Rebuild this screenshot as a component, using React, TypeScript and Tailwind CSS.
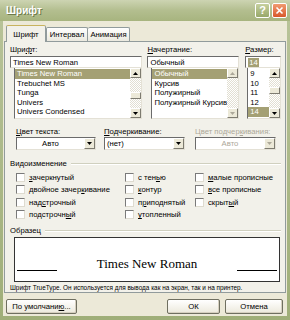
import type { ReactNode } from "react"

const sunken =
  "border border-t-[#6b6b6b] border-l-[#6b6b6b] border-r-[#e4e1d6] border-b-[#e4e1d6] bg-white"
const raised =
  "border border-t-white border-l-white border-r-[#7d7b70] border-b-[#7d7b70] bg-[#ece9d8]"

function Arrow({ up, disabled }: { up?: boolean; disabled?: boolean }) {
  return (
    <svg width="5" height="3" viewBox="0 0 5 3">
      <polygon points={up ? "0,3 5,3 2.5,0" : "0,0 5,0 2.5,3"} fill={disabled ? "#aca899" : "#000"} />
    </svg>
  )
}

function ScrollBtn({ up, disabled }: { up?: boolean; disabled?: boolean }) {
  return (
    <div className={`${raised} flex h-[10px] w-full items-center justify-center`}>
      <Arrow up={up} disabled={disabled} />
    </div>
  )
}

function ScrollBar({ thumb, disabled }: { thumb?: number; disabled?: boolean }) {
  return (
    <div className="flex h-full w-[11px] shrink-0 flex-col bg-[repeating-conic-gradient(#ffffff_0_25%,#e2dfd2_0_50%)] bg-[length:2px_2px]">
      <ScrollBtn up disabled={disabled} />
      <div className="relative flex-1">
        {thumb !== undefined && (
          <div className={`${raised} absolute left-0 h-[7px] w-full`} style={{ top: thumb }} />
        )}
      </div>
      <ScrollBtn disabled={disabled} />
    </div>
  )
}

function List({ items, selected, thumb, disabled }: { items: string[]; selected: string; thumb?: number; disabled?: boolean }) {
  return (
    <div className={`${sunken} flex h-[51px] border-t-0`}>
      <div className="flex-1 overflow-hidden pt-[1px]">
        {items.map((it) => (
          <div
            key={it}
            className={`h-[9.6px] whitespace-nowrap pl-[2px] leading-[9.6px] ${it === selected ? "bg-[#a4a074] text-white" : ""}`}
          >
            {it}
          </div>
        ))}
      </div>
      <ScrollBar thumb={thumb} disabled={disabled} />
    </div>
  )
}

function Select({ value, disabled, left }: { value: string; disabled?: boolean; left?: boolean }) {
  return (
    <div className={`${sunken} flex h-[13px] items-center ${disabled ? "bg-[#ece9d8] text-[#aca899]" : ""}`}>
      <div className={`flex-1 ${left ? "pl-[2px]" : "text-center"}`}>{value}</div>
      <div className={`${raised} flex h-[11px] w-[11px] items-center justify-center`}>
        <Arrow disabled={disabled} />
      </div>
    </div>
  )
}

function Check({ children }: { children: ReactNode }) {
  return (
    <div className="flex h-[12.5px] items-center gap-[4px] whitespace-nowrap">
      <div className="h-[9px] w-[9px] shrink-0 border border-t-[#7a7a7a] border-l-[#7a7a7a] border-r-[#dedbd0] border-b-[#dedbd0] bg-white" />
      <span>{children}</span>
    </div>
  )
}

function Group({ title }: { title: string }) {
  return (
    <div className="flex items-center gap-[4px]">
      <span>{title}</span>
      <div className="h-px flex-1 border-t border-t-[#d0d0bf] border-b border-b-white" />
    </div>
  )
}

function Button({ children, w }: { children: ReactNode; w: string }) {
  return (
    <div
      className={`${w} flex h-[15px] items-center justify-center rounded-[2px] border border-[#6f6f60] bg-gradient-to-b from-white to-[#ece9dc] shadow-[inset_-1px_-1px_0_#d6d0c0]`}
    >
      {children}
    </div>
  )
}

export default function App() {
  return (
    <div
      className="flex h-[320px] w-[290px] flex-col overflow-hidden bg-gradient-to-b from-[#b9c49a] to-[#9fae78] text-[7.7px] leading-[9px] text-black [&_u]:underline-offset-[1px]"
      style={{ fontFamily: '"Liberation Sans", Arial, sans-serif' }}
    >
      {/* title bar */}
      <div className="flex h-[21px] shrink-0 items-center justify-between bg-gradient-to-b from-[#cdd4b2] via-[#b3be8f] to-[#a7b47f] pl-[6px] pr-[3px]">
        <span className="text-[10px] font-bold text-white [text-shadow:1px_1px_0_#6d7a4a]">Шрифт</span>
        <div className="flex gap-[2px]">
          <div className="flex h-[15px] w-[15px] items-center justify-center rounded-[2px] border border-white bg-gradient-to-b from-[#c6d09e] to-[#98a86a] text-[11px] font-bold text-white">
            ?
          </div>
          <div className="flex h-[15px] w-[15px] items-center justify-center rounded-[2px] border border-white bg-gradient-to-b from-[#f09a70] to-[#d8572a]">
            <svg width="9" height="9" viewBox="0 0 9 9">
              <path d="M1.5 1.5 L7.5 7.5 M7.5 1.5 L1.5 7.5" stroke="#fff" strokeWidth="1.6" />
            </svg>
          </div>
        </div>
      </div>

      {/* body */}
      <div className="mx-[3px] mb-[4px] flex flex-1 flex-col bg-[#ece9d8] px-[1px] pt-[3px]">
        {/* tabs */}
        <div className="flex h-[17px] items-end pl-[2px]">
          <div className="relative z-10 mb-[-1px] flex h-[17px] w-[40px] items-center justify-center rounded-t-[2px] border border-b-0 border-[#919b9c] border-t-[#c8b35e] bg-[#f2f1ea]">
            Шрифт
          </div>
          <div className="flex h-[14px] w-[42px] items-center justify-center rounded-t-[2px] border border-b-0 border-[#919b9c] bg-gradient-to-b from-white to-[#ebe9df]">
            Интервал
          </div>
          <div className="flex h-[14px] w-[42px] items-center justify-center rounded-t-[2px] border border-b-0 border-l-0 border-[#919b9c] bg-gradient-to-b from-white to-[#ebe9df]">
            Анимация
          </div>
        </div>

        {/* panel */}
        <div className="flex h-[252px] flex-col border border-[#919b9c] bg-[#f2f1ea] pl-[5px] pr-[4px] pt-[3px]">
          <div className="flex">
            <div className="w-[133px]">
              <div className="h-[11px]">
                Шри<u>ф</u>т:
              </div>
              <div className={`${sunken} flex h-[12px] items-center pl-[2px]`}>Times New Roman</div>
              <div className="ml-[4px]">
                <List
                  items={["Times New Roman", "Trebuchet MS", "Tunga", "Univers", "Univers Condensed"]}
                  selected="Times New Roman"
                  thumb={14}
                />
              </div>
            </div>
            <div className="ml-[5px] w-[92px]">
              <div className="h-[11px]">
                <u>Н</u>ачертание:
              </div>
              <div className={`${sunken} flex h-[12px] items-center pl-[2px]`}>Обычный</div>
              <div className="ml-[4px]">
                <List items={["Обычный", "Курсив", "Полужирный", "Полужирный Курсив"]} selected="Обычный" disabled />
              </div>
            </div>
            <div className="ml-[6px] w-[36px]">
              <div className="h-[11px]">
                <u>Р</u>азмер:
              </div>
              <div className={`${sunken} flex h-[12px] items-center pl-[2px]`}>
                <span className="bg-[#a4a074] px-[1px] text-white">14</span>
              </div>
              <div className="ml-[2px]">
                <List items={["9", "10", "11", "12", "14"]} selected="14" thumb={9} />
              </div>
            </div>
          </div>

          {/* colour / underline */}
          <div className="mt-[8px] flex pl-[6px]">
            <div className="w-[80px]">
              <div className="h-[10px]">
                <u>Ц</u>вет текста:
              </div>
              <Select value="Авто" />
            </div>
            <div className="ml-[8px] w-[81px]">
              <div className="h-[10px]">
                <u>П</u>одчеркивание:
              </div>
              <Select value="(нет)" left />
            </div>
            <div className="ml-[10px] w-[81px] text-[#aca899]">
              <div className="h-[10px]">
                Цвет подчер<u>к</u>ивания:
              </div>
              <Select value="Авто" disabled />
            </div>
          </div>

          {/* effects */}
          <div className="mt-[9px]">
            <Group title="Видоизменение" />
          </div>
          <div className="mt-[3px] flex pl-[6px]">
            <div className="w-[109px]">
              <Check>
                <u>з</u>ачеркнутый
              </Check>
              <Check>
                двойное зачер<u>к</u>ивание
              </Check>
              <Check>
                над<u>с</u>трочный
              </Check>
              <Check>
                подстрочн<u>ы</u>й
              </Check>
            </div>
            <div className="w-[70px]">
              <Check>
                с тен<u>ь</u>ю
              </Check>
              <Check>
                <u>к</u>онтур
              </Check>
              <Check>
                п<u>р</u>иподнятый
              </Check>
              <Check>
                <u>у</u>топленный
              </Check>
            </div>
            <div>
              <Check>
                <u>м</u>алые прописные
              </Check>
              <Check>
                <u>в</u>се прописные
              </Check>
              <Check>
                скрыт<u>ы</u>й
              </Check>
            </div>
          </div>

          {/* sample */}
          <div className="mt-[5px]">
            <Group title="Образец" />
          </div>
          <div className="ml-[4px] mr-[1px] mt-[2px] flex h-[45px] items-end justify-between border border-[#333] bg-white px-[2px] pb-[10px]">
            <div className="h-px w-[40px] bg-black" />
            <span className="mb-[1px] text-[13px] leading-[13px]" style={{ fontFamily: '"Liberation Serif", "Times New Roman", serif' }}>
              Times New Roman
            </span>
            <div className="h-px w-[40px] bg-black" />
          </div>
          <div className="mt-[2px] whitespace-nowrap text-[6.4px] leading-[8px]">
            Шрифт TrueType. Он используется для вывода как на экран, так и на принтер.
          </div>
        </div>

        {/* buttons */}
        <div className="mt-[6px] flex items-center pl-[2px] pr-[3px]">
          <Button w="w-[71px]">
            По умолчани<u>ю</u>...
          </Button>
          <div className="flex-1" />
          <Button w="w-[53px]">ОК</Button>
          <div className="w-[5px]" />
          <Button w="w-[58px]">Отмена</Button>
        </div>
      </div>
    </div>
  )
}
